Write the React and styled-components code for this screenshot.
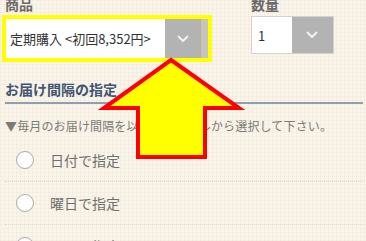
import React from "react";
import styled, { createGlobalStyle } from "styled-components";

const Global = createGlobalStyle`
  html, body { margin: 0; padding: 0; }
  body {
    width: 366px;
    height: 241px;
    overflow: hidden;
    font-family: "Noto Sans CJK JP", "Noto Sans", sans-serif;
    background-color: #faf5ea;
    background-image:
      repeating-linear-gradient(0deg, rgba(225, 210, 185, 0.18) 0 1px, transparent 1px 4px),
      repeating-linear-gradient(90deg, rgba(225, 210, 185, 0.18) 0 1px, transparent 1px 4px);
  }
`;

const Page = styled.div`
  position: relative;
  padding: 0 3px 0 2px;
`;

const TopRow = styled.div`
  display: flex;
  align-items: flex-start;
`;

const Field = styled.div`
  display: flex;
  flex-direction: column;
  margin-left: ${(p) => p.$ml || 0}px;
`;

const Label = styled.div`
  font-size: 14px;
  line-height: 16px;
  height: 16px;
  margin-top: -4px;
  margin-left: ${(p) => p.$ml || 0}px;
  font-weight: 700;
  color: #6a6a6a;
`;

const Highlight = styled.div`
  box-sizing: border-box;
  width: 210px;
  height: 47px;
  margin-top: 3px;
  border: 4px solid #ffff00;
  display: flex;
`;

const SelectText = styled.div`
  flex: 1;
  background: #fff;
  font-size: 13px;
  color: #333;
  display: flex;
  align-items: center;
  padding-left: 4px;
  white-space: nowrap;
`;

const DropButton = styled.div`
  box-sizing: border-box;
  width: ${(p) => p.$w}px;
  background: #b3b3b3;
  display: flex;
  align-items: center;
  justify-content: center;
  border-right: ${(p) => (p.$tan ? "1px solid #c9ab7c" : "none")};
`;

const Strip = styled.div`
  width: 7px;
  background: #c4c4c4;
`;

const QtyBox = styled.div`
  box-sizing: border-box;
  width: 83px;
  height: 38px;
  margin-top: 4px;
  border: 1px solid #d6d2ca;
  display: flex;
`;

const QtyText = styled.div`
  width: 40px;
  background: #fff;
  font-size: 13px;
  color: #333;
  display: flex;
  align-items: center;
  padding-left: 6px;
  box-sizing: border-box;
`;

const Heading = styled.h2`
  margin: 17px 0 0 3px;
  font-size: 14px;
  line-height: 20px;
  font-weight: 700;
  color: #3f5673;
  padding-bottom: 3px;
  border-bottom: 2px solid #8d9fb2;
`;

const Note = styled.p`
  margin: 13px 0 0 3px;
  font-size: 12px;
  line-height: 18px;
  letter-spacing: 0.15px;
  color: #7a7a7a;
  white-space: nowrap;
`;

const Options = styled.div`
  margin: 4px 0 0 3px;
`;

const Option = styled.label`
  display: flex;
  align-items: center;
  height: 42px;
  border-bottom: 1px dotted #ddd6ca;
  padding-left: 11px;
  gap: 16px;
  font-size: 14px;
  color: #6f6f6f;
`;

const Radio = styled.span`
  box-sizing: border-box;
  width: 18px;
  height: 18px;
  border-radius: 50%;
  border: 1.5px solid #a9a9a9;
  background: #fff;
  flex: none;
`;

const ArrowSvg = styled.svg`
  position: absolute;
  left: 0;
  top: 0;
  pointer-events: none;
`;

const Chevron = () => (
  <svg width="12" height="8" viewBox="0 0 12 8">
    <path d="M1.5 1.5 L6 6 L10.5 1.5" fill="none" stroke="#f4f4f4" strokeWidth="1.8" strokeLinecap="round" strokeLinejoin="round" />
  </svg>
);

export default function App() {
  return (
    <Page>
      <Global />
      <TopRow>
        <Field>
          <Label $ml={3}>商品</Label>
          <Highlight>
            <SelectText>定期購入 &lt;初回8,352円&gt;</SelectText>
            <DropButton $w={36} $tan>
              <Chevron />
            </DropButton>
            <Strip />
          </Highlight>
        </Field>
        <Field $ml={39}>
          <Label>数量</Label>
          <QtyBox>
            <QtyText>1</QtyText>
            <DropButton $w={42}>
              <Chevron />
            </DropButton>
          </QtyBox>
        </Field>
      </TopRow>
      <Heading>お届け間隔の指定</Heading>
      <Note>▼毎月のお届け間隔を以下のサイクルから選択して下さい。</Note>
      <Options>
        <Option><Radio />日付で指定</Option>
        <Option><Radio />曜日で指定</Option>
        <Option><Radio />間隔で指定</Option>
      </Options>
      <ArrowSvg width="366" height="241" viewBox="0 0 366 241">
        <polygon
          points="171,60 239,108 205,108 205,157 138,157 138,108 104,108"
          fill="#ffff00"
          stroke="#ff0000"
          strokeWidth="4"
          strokeLinejoin="miter"
        />
      </ArrowSvg>
    </Page>
  );
}
